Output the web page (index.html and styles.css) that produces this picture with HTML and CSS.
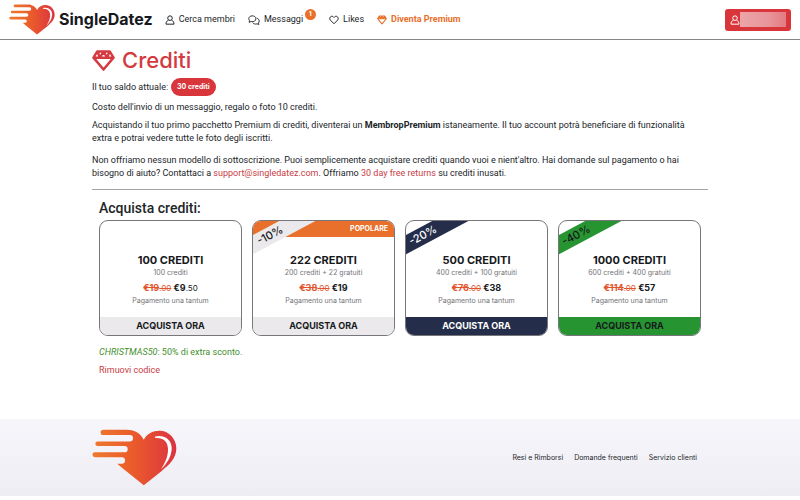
FILE: index.html
```html
<!DOCTYPE html>
<html lang="it">
<head>
    <meta charset="UTF-8">
    <meta name="viewport" content="width=device-width, initial-scale=1.0">
    <title>SingleDatez - Crediti</title>
    <link rel="stylesheet" href="styles.css">
</head>
<body>
    <!-- Shared icons -->
    <svg class="sprite" aria-hidden="true">
        <defs>
            <linearGradient id="logo-fill" x1="0" x2="1" y1="0" y2="0">
                <stop offset="0" stop-color="#ee7a2c"/>
                <stop offset="0.5" stop-color="#ea5a2b"/>
                <stop offset="1" stop-color="#dc3340"/>
            </linearGradient>
        </defs>
        <symbol id="logo" viewBox="34 56 256 171">
            <path fill="url(#logo-fill)" d="M190 88C178 66 160 58 138 58H68a8 8 0 0 0 0 16H148a9 9 0 0 1 0 19H51a7 7 0 0 0 0 14H132a9 9 0 0 1 0 19H43a7 7 0 0 0 0 15H124a9 9 0 0 1 0 19H110Q118 167 126 174L190 225L244 182C268 162 288 144 288 114C288 84 264 61 238 61C216 61 200 70 190 88Z"/>
            <path fill="#fff" d="M224 78C252 71 276 88 274 117C272 142 258 162 242 177C254 157 263 140 263 116C262 91 247 81 224 83Z"/>
        </symbol>
        <symbol id="user" viewBox="0 0 24 24">
            <g fill="none" stroke="currentColor" stroke-width="2.4">
                <circle cx="12" cy="7.5" r="5.5"/>
                <path stroke-linejoin="round" d="M8 13C4 14 2.500 17 2.500 22H21.500C21.500 17 20 14 16 13"/>
            </g>
        </symbol>
        <symbol id="chat" viewBox="0 0 28 24">
            <g fill="none" stroke="currentColor" stroke-width="2.200" stroke-linejoin="round">
                <path d="M10 2C5 2 1.500 5 1.500 9C1.500 11 2.300 12.500 3.500 14L2 17.500L7 15.800C14 17.500 18.500 13.500 18.500 9C18.500 5 15 2 10 2Z"/>
                <path d="M20.500 7.500C24 8.500 26.500 11 26.500 14.500C26.500 16.500 25.800 18 24.500 19.300L26 22.500L21 21.300C16.500 22.500 12.500 21 11 18.500"/>
            </g>
        </symbol>
        <symbol id="heart" viewBox="0 0 24 24">
            <path fill="none" stroke="currentColor" stroke-width="2.400" stroke-linejoin="round" d="M12 21L3.500 12.500C-1 7 5 .5 10 4L12 6L14 4C19 .5 25 7 20.500 12.500Z"/>
        </symbol>
        <symbol id="gem" viewBox="0 0 24 22">
            <path fill="none" stroke="currentColor" stroke-width="2.600" stroke-linejoin="round" d="M5.500 1.500H18.500L22.500 8L12 20.500L1.500 8ZM1.500 8H22.500M6 2L8 8L12 2L16 8L18 2"/>
        </symbol>
    </svg>

    <header class="topbar">
        <a class="brand" href="#">
            <svg class="brand-logo"><use href="#logo"/></svg>
            <span>SingleDatez</span>
        </a>
        <nav class="menu">
            <a href="#"><svg class="icon"><use href="#user"/></svg>Cerca membri</a>
            <a href="#" class="messages"><svg class="icon icon-wide"><use href="#chat"/></svg>Messaggi<span class="count">1</span></a>
            <a href="#"><svg class="icon"><use href="#heart"/></svg>Likes</a>
            <a href="#" class="premium"><svg class="icon"><use href="#gem"/></svg>Diventa Premium</a>
        </nav>
        <button class="account" type="button" aria-label="Account">
            <svg class="icon"><use href="#user"/></svg>
            <span class="account-name"></span>
        </button>
    </header>

    <main class="container">
        <h1><svg class="title-icon"><use href="#gem"/></svg>Crediti</h1>
        <p class="balance">Il tuo saldo attuale: <span class="pill">30 crediti</span></p>
        <p class="cost">Costo dell'invio di un messaggio, regalo o foto 10 crediti.</p>
        <p class="intro">Acquistando il tuo primo pacchetto Premium di crediti, diventerai un <strong>MembropPremium</strong> istaneamente. Il tuo account potrà beneficiare di funzionalità extra e potrai vedere tutte le foto degli iscritti.</p>
        <p class="info">Non offriamo nessun modello di sottoscrizione. Puoi semplicemente acquistare crediti quando vuoi e nient'altro. Hai domande sul pagamento o hai bisogno di aiuto? Contattaci a <a href="#">support@singledatez.com</a>. Offriamo <a href="#">30 day free returns</a> su crediti inusati.</p>

        <section class="shop">
            <h2>Acquista crediti:</h2>
            <div class="packs">
                <article class="pack">
                    <div class="pack-top"></div>
                    <div class="pack-body">
                        <h3>100 CREDITI</h3>
                        <p>100 crediti</p>
                        <p class="price"><s><b>€19</b>.00</s> <b>€9</b>.50</p>
                        <p>Pagamento una tantum</p>
                    </div>
                    <button type="button">ACQUISTA ORA</button>
                </article>
                <article class="pack popular">
                    <div class="pack-top">POPOLARE</div>
                    <span class="ribbon">-10%</span>
                    <div class="pack-body">
                        <h3>222 CREDITI</h3>
                        <p>200 crediti + 22 gratuiti</p>
                        <p class="price"><s><b>€38</b>.00</s> <b>€19</b></p>
                        <p>Pagamento una tantum</p>
                    </div>
                    <button type="button">ACQUISTA ORA</button>
                </article>
                <article class="pack navy">
                    <div class="pack-top"></div>
                    <span class="ribbon">-20%</span>
                    <div class="pack-body">
                        <h3>500 CREDITI</h3>
                        <p>400 crediti + 100 gratuiti</p>
                        <p class="price"><s><b>€76</b>.00</s> <b>€38</b></p>
                        <p>Pagamento una tantum</p>
                    </div>
                    <button type="button">ACQUISTA ORA</button>
                </article>
                <article class="pack green">
                    <div class="pack-top"></div>
                    <span class="ribbon">-40%</span>
                    <div class="pack-body">
                        <h3>1000 CREDITI</h3>
                        <p>600 crediti + 400 gratuiti</p>
                        <p class="price"><s><b>€114</b>.00</s> <b>€57</b></p>
                        <p>Pagamento una tantum</p>
                    </div>
                    <button type="button">ACQUISTA ORA</button>
                </article>
            </div>
            <p class="coupon"><em>CHRISTMAS50</em>: 50% di extra sconto.</p>
            <p class="remove"><a href="#">Rimuovi codice</a></p>
        </section>
    </main>

    <footer class="footer">
        <div class="container footer-inner">
            <svg class="footer-logo"><use href="#logo"/></svg>
            <nav class="footer-links">
                <a href="#">Resi e Rimborsi</a>
                <a href="#">Domande frequenti</a>
                <a href="#">Servizio clienti</a>
            </nav>
        </div>
    </footer>
</body>
</html>
```
FILE: styles.css
```css
* {
    box-sizing: border-box;
}
body {
    font-family: Roboto, "Liberation Sans", sans-serif;
    font-size: 9px;
    line-height: 13px;
    margin: 0;
    color: #212529;
    background-color: #fff;
}
h1, h2, h3, p {
    margin: 0;
}
a {
    color: #c93c44;
    text-decoration: none;
}
button {
    font-family: inherit;
    border: none;
    cursor: pointer;
}
.sprite {
    position: absolute;
    width: 0;
    height: 0;
}
.icon {
    width: 10px;
    height: 10px;
    flex: none;
}
.icon-wide {
    width: 12px;
}
.brand, h1, .pill, .packs, .footer-links {
    font-family: Inter, "Liberation Sans", sans-serif;
}

/* Top bar */
.topbar {
    display: flex;
    align-items: center;
    height: 40px;
    padding: 0 9px;
    border-bottom: 1px solid #85858a;
}
.brand {
    display: flex;
    align-items: center;
    gap: 4px;
    color: #17191c;
    font-size: 16px;
    font-weight: 700;
}
.brand-logo {
    width: 46px;
    height: 31px;
}
.menu {
    display: flex;
    gap: 13px;
    margin-left: 12px;
}
.menu a {
    display: flex;
    align-items: center;
    gap: 4px;
    color: #212529;
}
.menu .messages {
    position: relative;
    padding-right: 13px;
}
.count {
    position: absolute;
    top: -4px;
    right: 0;
    width: 11px;
    height: 11px;
    border-radius: 50%;
    background-color: #e8702a;
    color: #fff;
    font-size: 7px;
    font-weight: 700;
    line-height: 11px;
    text-align: center;
}
.menu .premium {
    color: #e8702a;
    font-weight: 700;
}
.account {
    display: flex;
    align-items: center;
    width: 66px;
    height: 22px;
    margin-left: auto;
    padding: 0 5px;
    border-radius: 3px;
    background-color: #d9363b;
    color: #fff;
}
/* Hidden user name */
.account-name {
    flex: 1;
    height: 15px;
    background: linear-gradient(90deg, #eba5a8, #e9969a 60%, #e27c82);
}

/* Page text */
.container {
    max-width: 616px;
    margin: 0 auto;
}
h1 {
    display: flex;
    align-items: center;
    gap: 7px;
    padding-top: 5px;
    color: #d33b40;
    font-size: 22px;
    font-weight: 500;
    line-height: 30px;
}
.title-icon {
    width: 23px;
    height: 21px;
}
.balance {
    display: flex;
    align-items: center;
    gap: 3px;
    margin-top: 3px;
}
.pill {
    padding: 3px 6px;
    border-radius: 9px;
    background-color: #d9363b;
    color: #fff;
    font-size: 7px;
    font-weight: 700;
    line-height: 12px;
}
.cost {
    margin-top: 5px;
}
.intro {
    margin-top: 5px;
    padding-right: 8px;
}
.info {
    margin-top: 9px;
    padding-bottom: 9px;
    border-bottom: 1px solid #a3a3a6;
}

/* Credit packs */
.shop {
    padding: 9px 7px 0;
}
h2 {
    font-size: 14px;
    font-weight: 500;
    line-height: 18px;
}
.packs {
    display: grid;
    grid-template-columns: repeat(4, 1fr);
    gap: 10px;
    margin-top: 3px;
}
.pack {
    position: relative;
    overflow: hidden;
    border: 1px solid #77777b;
    border-radius: 9px;
    color: #17191c;
    text-align: center;
}
.pack-top {
    height: 16px;
    padding: 0 6px;
    color: #fff;
    font-size: 7px;
    font-weight: 700;
    line-height: 16px;
    text-align: right;
}
.ribbon {
    position: absolute;
    top: 6px;
    left: -33px;
    width: 100px;
    height: 17px;
    background-color: #ebe9ec;
    font-size: 11px;
    font-weight: 500;
    line-height: 17px;
    transform: rotate(-28deg);
}
.pack-body {
    padding: 16px 0 10px;
}
h3 {
    font-size: 11px;
    font-weight: 700;
    line-height: 14px;
}
.pack-body p {
    color: #737377;
    font-size: 7px;
    line-height: 12px;
}
.pack-body .price {
    margin-top: 2px;
    color: #17191c;
    font-size: 8px;
    line-height: 13px;
}
.price b {
    font-size: 9px;
}
.price s {
    color: #e2552c;
}
.pack button {
    display: block;
    width: 100%;
    padding: 0;
    background-color: #ebe9ec;
    color: #17191c;
    font-size: 9px;
    font-weight: 700;
    line-height: 18px;
}
.popular .pack-top {
    background-color: #e8702a;
}
.navy .ribbon,
.navy button {
    background-color: #242d49;
    color: #fff;
}
.green .ribbon,
.green button {
    background-color: #279432;
}
.coupon {
    margin-top: 10px;
    color: #3f8f2c;
}
.remove {
    margin-top: 5px;
}

/* Footer */
.footer {
    margin-top: 42px;
    background: linear-gradient(#f7f6fb, #eeedf3);
}
.footer-inner {
    display: flex;
    align-items: center;
    justify-content: space-between;
    padding: 10px 11px 10px 0;
}
.footer-logo {
    width: 85px;
    height: 57px;
}
.footer-links {
    display: flex;
    gap: 11px;
}
.footer-links a {
    color: #212529;
    font-size: 7px;
}
```
